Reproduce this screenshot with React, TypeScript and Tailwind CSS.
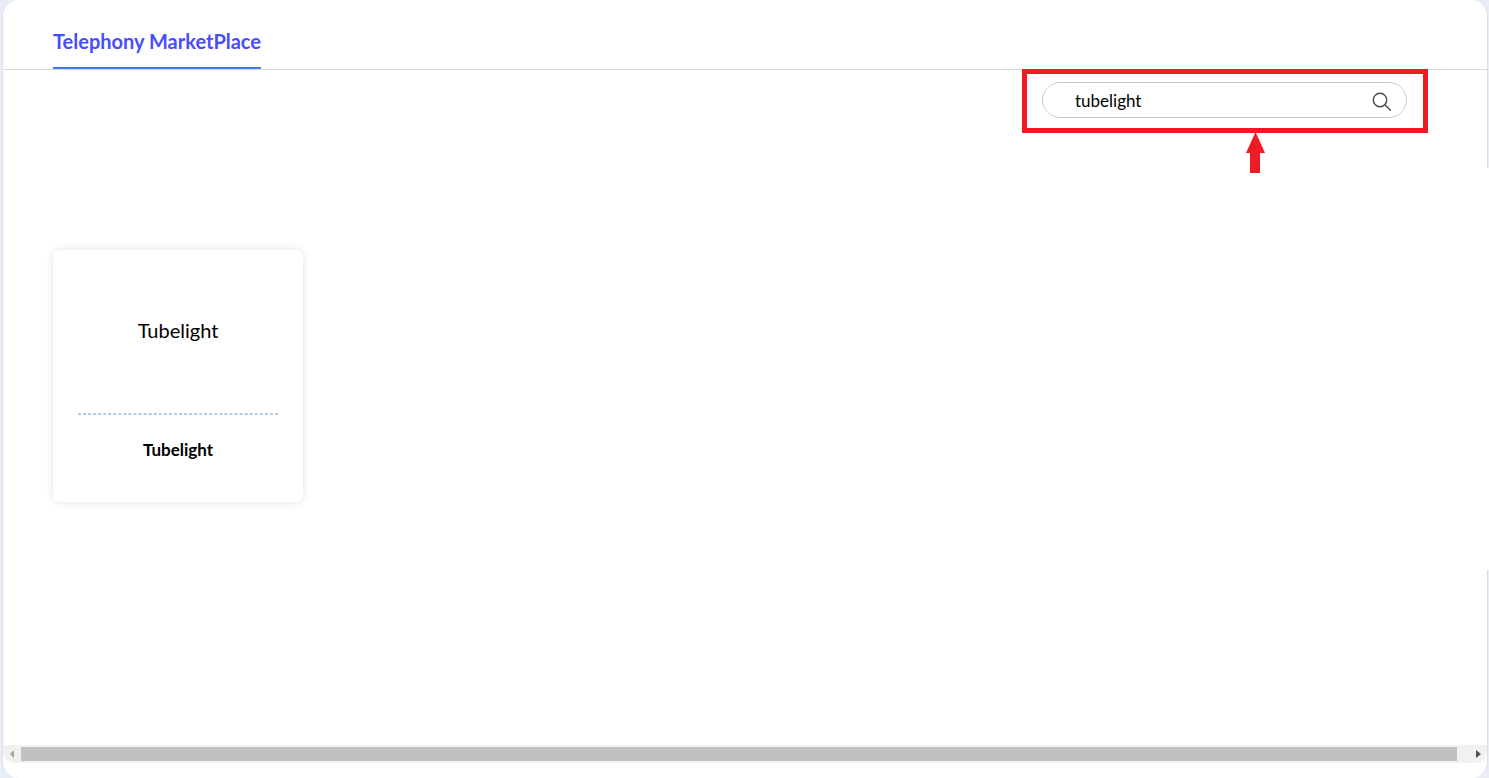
import { useState } from "react";

const providers = [{ id: 1, logo: "Tubelight", name: "Tubelight" }];

function SearchIcon() {
  return (
    <svg
      className="mt-1"
      width="20"
      height="20"
      viewBox="0 0 20 20"
      fill="none"
      stroke="#4a4a4a"
      strokeWidth="1.4"
    >
      <circle cx="8" cy="8" r="6.7" />
      <path d="M12.8 12.8 L18.8 18.6" />
    </svg>
  );
}

function ProviderCard({ logo, name }: { logo: string; name: string }) {
  return (
    <article className="w-[250px] rounded-md bg-white px-[25px] pb-9 text-center text-black shadow-[0_0_8px_rgba(0,0,0,0.12)]">
      <div className="flex h-[163px] items-center justify-center pb-1 text-xl">
        {logo}
      </div>

      {/* DASHED DIVIDER */}
      <svg className="block h-[2px] w-full" aria-hidden="true">
        <line
          x1="0"
          y1="1"
          x2="100%"
          y2="1"
          stroke="#b3cddd"
          strokeWidth="2"
          strokeDasharray="3 2.05"
        />
      </svg>

      <h2 className="pt-[21px] pb-[2px] text-[17px] leading-7 font-bold">
        {name}
      </h2>
    </article>
  );
}

export default function TelephonyMarketPlace() {
  const [query, setQuery] = useState("tubelight");

  return (
    <main className="relative flex min-h-screen bg-[#e9eef5] pr-px pl-[2px] font-['Lato',sans-serif]">
      <section className="flex min-w-0 flex-1 flex-col overflow-hidden rounded-2xl border-x border-[#d3e0ee] bg-white">
        {/* HEADER */}
        <header className="flex h-[70px] border-b border-[#d9d9d9] px-[50px]">
          <a
            href="#marketplace"
            className="flex items-center border-b-2 border-[#3f7bea] pt-[14px] text-xl font-bold text-[#484dfb]"
          >
            Telephony MarketPlace
          </a>
        </header>

        {/* SEARCH */}
        <div className="-mt-px flex justify-end pr-[59px]">
          <div className="relative border-[5px] border-[#ed1c24] pt-2 pr-4 pb-[10px] pl-[15px]">
            <label className="flex h-9 w-[365px] items-center rounded-full border border-[#c8c8c8] pr-[14px] pl-8">
              <input
                type="text"
                aria-label="Search providers"
                value={query}
                onChange={(e) => setQuery(e.target.value)}
                className="min-w-0 flex-1 bg-transparent pt-px text-[17px] text-black outline-none"
              />
              <SearchIcon />
            </label>

            {/* POINTER */}
            <svg
              className="absolute top-full left-[219px] mt-[5px]"
              width="19"
              height="40"
              viewBox="0 0 19 40"
              fill="#ed1c24"
            >
              <path d="M9 0 H10 L19 20 H14 V40 H4 V20 H0 Z" />
            </svg>
          </div>
        </div>

        {/* PROVIDERS */}
        <div className="flex flex-1 flex-wrap items-start gap-8 px-[50px] pt-[117px] pb-8">
          {providers.map((p) => (
            <ProviderCard key={p.id} logo={p.logo} name={p.name} />
          ))}
        </div>

        {/* HORIZONTAL SCROLLBAR */}
        <div className="mb-[15px] flex h-[18px] items-center overflow-hidden rounded-b-xl bg-[#f1f1f1]">
          <button
            type="button"
            aria-label="Scroll left"
            className="flex h-full w-[18px] items-center justify-center"
          >
            <svg width="4" height="8" viewBox="0 0 4 8" fill="#a3a3a3">
              <path d="M4 0 V8 L0 4 Z" />
            </svg>
          </button>
          <div className="mr-3 h-[14px] flex-1 bg-[#c1c1c1]"></div>
          <button
            type="button"
            aria-label="Scroll right"
            className="flex h-full w-[18px] items-center justify-center"
          >
            <svg width="5" height="8" viewBox="0 0 5 8" fill="#505050">
              <path d="M0 0 V8 L5 4 Z" />
            </svg>
          </button>
        </div>
      </section>

      {/* EDGE COVER */}
      <div className="absolute top-[168px] right-0 h-[402px] w-[2px] bg-white"></div>
    </main>
  );
}
